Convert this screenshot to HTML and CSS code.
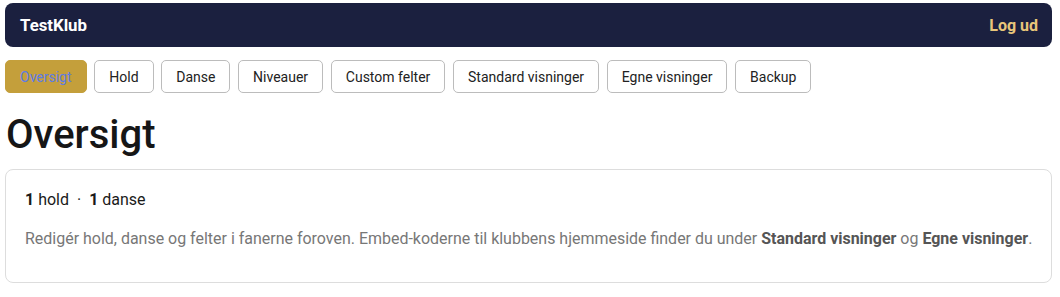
FILE: index.html
```html
<!DOCTYPE html>
<html lang="da">

<head>
	<meta charset="UTF-8">
	<meta name="viewport" content="width=device-width, initial-scale=1.0">
	<title>TestKlub - Oversigt</title>
	<link rel="stylesheet" href="styles.css">
</head>

<body>
	<header class="topbar">
		<span class="brand">TestKlub</span>
		<a class="logout" href="#">Log ud</a>
	</header>

	<nav class="tabs">
		<a class="tab active" href="#">Oversigt</a>
		<a class="tab" href="#">Hold</a>
		<a class="tab" href="#">Danse</a>
		<a class="tab" href="#">Niveauer</a>
		<a class="tab" href="#">Custom felter</a>
		<a class="tab" href="#">Standard visninger</a>
		<a class="tab" href="#">Egne visninger</a>
		<a class="tab" href="#">Backup</a>
	</nav>

	<h1 class="page-title">Oversigt</h1>

	<div class="card">
		<div class="stats">
			<b>1</b> hold <span class="dot">·</span> <b>1</b> danse
		</div>
		<p class="hint">
			Redigér hold, danse og felter i fanerne foroven. Embed-koderne til klubbens hjemmeside finder du under
			<b>Standard visninger</b> og <b>Egne visninger</b>.
		</p>
	</div>
</body>

</html>
```

FILE: styles.css
```css
* {
	box-sizing: border-box;
	font-family: Roboto, "Liberation Sans", Arial, sans-serif;
}

body {
	margin: 0;
	padding: 3px 8px 0 5px;
	background: #fff;
	color: #1a1a1a;
}

.topbar {
	display: flex;
	justify-content: space-between;
	align-items: center;
	height: 44px;
	padding: 0 14px 0 15px;
	background: #1b203f;
	border-radius: 8px;
}

.brand {
	color: #fff;
	font-weight: bold;
	font-size: 16.8px;
}

.logout {
	color: #e9c67a;
	font-weight: bold;
	font-size: 16px;
	text-decoration: none;
}

.tabs {
	display: flex;
	gap: 7.7px;
	margin-top: 13px;
}

.tab {
	display: flex;
	align-items: center;
	height: 33px;
	padding: 0 14px;
	border: 1px solid #bcbcbc;
	border-radius: 5px;
	background: #fff;
	color: #222;
	font-size: 14px;
	text-decoration: none;
}

.tab.active {
	background: #c49f3b;
	border-color: #c49f3b;
	color: #5d7ce4;
}

.page-title {
	margin: 20px 0 12px 1px;
	font-size: 40px;
	font-weight: 500;
	line-height: 44px;
	color: #161616;
}

.card {
	border: 1px solid #ddd;
	border-radius: 8px;
	padding: 20px 19px 34px;
}

.stats {
	font-size: 16px;
	line-height: 19px;
	color: #1a1a1a;
}

.stats b {
	font-weight: bold;
}

.dot {
	margin: 0 4px;
}

.hint {
	margin: 20px 0 0;
	font-size: 15.97px;
	line-height: 19px;
	white-space: nowrap;
	color: #777;
}

.hint b {
	color: #555;
}
```
